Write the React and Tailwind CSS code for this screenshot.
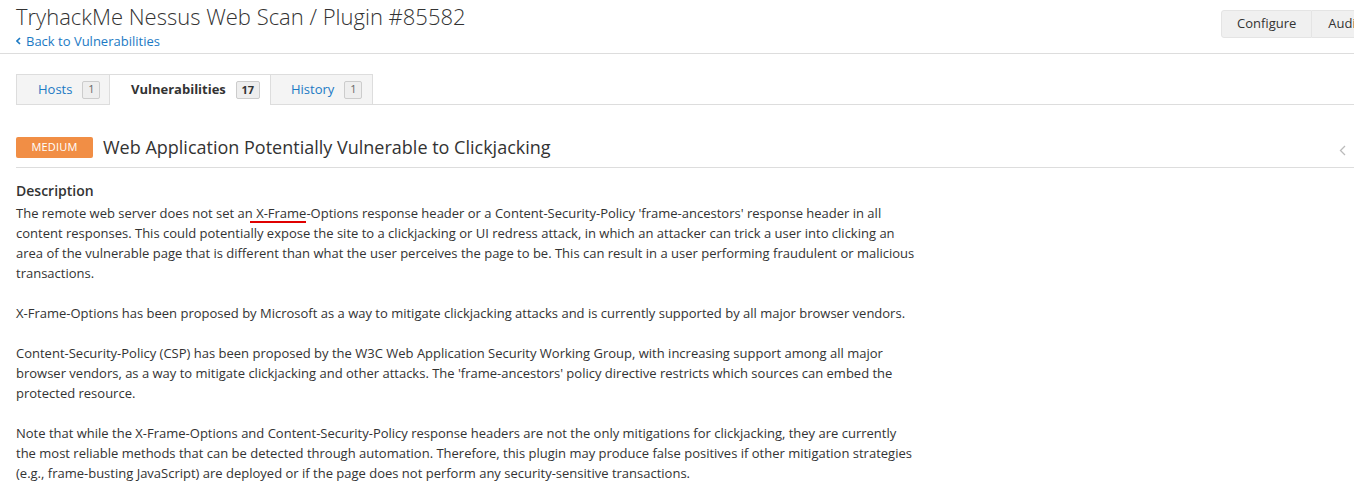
export default function App() {
  const font = { fontFamily: '"Open Sans", "Liberation Sans", sans-serif' };
  return (
    <div className="w-[1354px] h-[498px] overflow-hidden bg-white text-[#333]" style={font}>
      {/* header */}
      <div className="flex justify-between border-b border-[#ddd] h-[54px] overflow-hidden">
        <div className="pl-4">
          <h1 className="text-[22px] font-light leading-[28px] text-[#333] mt-[2px]">TryhackMe Nessus Web Scan / Plugin #85582</h1>
          <a className="flex items-center gap-[5px] text-[13px] leading-[18px] text-[#1c7ac4] mt-[2px]">
            <svg width="5" height="8" viewBox="0 0 5 8"><path d="M4 1 L1 4 L4 7" fill="none" stroke="#1c7ac4" strokeWidth="1.6" /></svg>
            Back to Vulnerabilities
          </a>
        </div>
        <div className="flex mt-[10px] h-[28px] shrink-0 -mr-[53px]">
          <div className="flex items-center px-[15px] bg-[#f0f0f0] border border-[#e4e4e4] rounded-l-[3px] text-[13px] text-[#333]">Configure</div>
          <div className="flex items-center px-4 bg-[#f0f0f0] border border-l-0 border-[#e4e4e4] text-[13px] text-[#333]">Audit Trail</div>
        </div>
      </div>

      {/* tabs */}
      <div className="pl-4 mt-[20px]">
        <div className="flex border-b border-[#ddd] h-[31px]">
          <div className="flex items-center w-[94px] pl-[21px] bg-[#f4f4f4] border border-[#ddd] border-b-0 h-[30px]">
            <span className="text-[13px] text-[#1c7ac4]">Hosts</span>
            <span className="ml-[10px] inline-flex items-center justify-center w-[18px] h-[18px] bg-[#eee] border border-[#ccc] rounded-[2px] text-[11px] text-[#666]">1</span>
          </div>
          <div className="flex items-center w-[160px] pl-[21px] bg-white border-t border-[#ddd] h-[31px] -mb-px">
            <span className="text-[13px] font-bold text-[#333]">Vulnerabilities</span>
            <span className="ml-[10px] inline-flex items-center justify-center w-[24px] h-[18px] bg-[#eee] border border-[#ccc] rounded-[2px] text-[11px] font-bold text-[#333]">17</span>
          </div>
          <div className="flex items-center w-[103px] pl-[20px] bg-[#f4f4f4] border border-[#ddd] border-b-0 h-[30px]">
            <span className="text-[13px] text-[#1c7ac4]">History</span>
            <span className="ml-[10px] inline-flex items-center justify-center w-[18px] h-[18px] bg-[#eee] border border-[#ccc] rounded-[2px] text-[11px] text-[#666]">1</span>
          </div>
        </div>
      </div>

      {/* vulnerability heading */}
      <div className="pl-4 mt-[31px]">
        <div className="flex items-center border-b border-[#ddd] h-[32px] pb-[9px] relative">
          <span className="inline-flex items-center justify-center w-[77px] h-[21px] bg-[#f18e45] rounded-[2px] text-[11px] text-white tracking-[0.2px]">MEDIUM</span>
          <span className="ml-[10px] text-[18px] leading-[24px] text-[#333]">Web Application Potentially Vulnerable to Clickjacking</span>
          <svg className="absolute right-[8px] top-[9px]" width="7" height="11" viewBox="0 0 7 11"><path d="M6 1 L1.5 5.5 L6 10" fill="none" stroke="#bbb" strokeWidth="1.3" /></svg>
        </div>
      </div>

      {/* description */}
      <div className="pl-4 mt-[13px] w-[916px]">
        <h3 className="text-[14px] font-semibold leading-[20px] text-[#333]">Description</h3>
        <div className="text-[13px] leading-[20px] text-[#333] mt-[2px]">
          <p>
            The remote web server does not set an <span className="relative">X-Frame<span className="absolute left-[-6px] right-0 bottom-[-1px] h-[2px] bg-[#e00000]"></span></span>-Options response header or a Content-Security-Policy 'frame-ancestors' response header in all content responses. This could potentially expose the site to a clickjacking or UI redress attack, in which an attacker can trick a user into clicking an area of the vulnerable page that is different than what the user perceives the page to be. This can result in a user performing fraudulent or malicious transactions.
          </p>
          <p className="mt-[20px]">
            X-Frame-Options has been proposed by Microsoft as a way to mitigate clickjacking attacks and is currently supported by all major browser vendors.
          </p>
          <p className="mt-[20px]">
            Content-Security-Policy (CSP) has been proposed by the W3C Web Application Security Working Group, with increasing support among all major browser vendors, as a way to mitigate clickjacking and other attacks. The 'frame-ancestors' policy directive restricts which sources can embed the protected resource.
          </p>
          <p className="mt-[20px]">
            Note that while the X-Frame-Options and Content-Security-Policy response headers are not the only mitigations for clickjacking, they are currently the most reliable methods that can be detected through automation. Therefore, this plugin may produce false positives if other mitigation strategies (e.g., frame-busting JavaScript) are deployed or if the page does not perform any security-sensitive transactions.
          </p>
        </div>
      </div>
    </div>
  );
}
